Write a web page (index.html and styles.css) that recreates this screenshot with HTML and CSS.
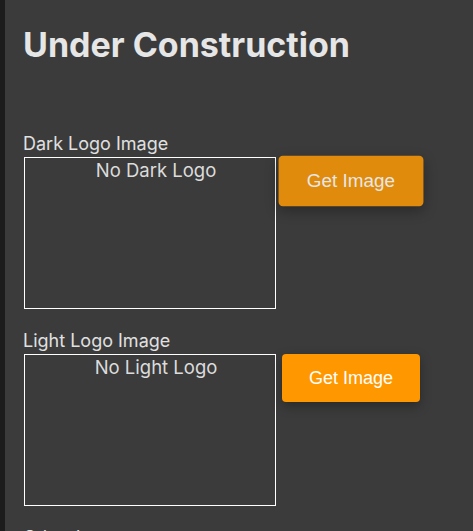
FILE: index.html
```html
<!DOCTYPE html>
<html>
<head>
<meta charset="utf-8">
<link rel="stylesheet" href="styles.css">
</head>
<body>
<div class="page">
  <div class="strip"></div>
  <main class="content">
    <h1 class="title">Under Construction</h1>
    <section class="field">
      <div class="label">Dark Logo Image</div>
      <div class="row">
        <div class="preview">No Dark Logo</div>
        <button class="btn btn-hover">Get Image</button>
      </div>
    </section>
    <section class="field">
      <div class="label">Light Logo Image</div>
      <div class="row">
        <div class="preview">No Light Logo</div>
        <button class="btn">Get Image</button>
      </div>
    </section>
    <section class="field">
      <div class="label">Other Image</div>
    </section>
  </main>
</div>
</body>
</html>
```
FILE: styles.css
```css
html, body {
  margin: 0;
  padding: 0;
  height: 100%;
  overflow: hidden;
}
body {
  background: #3b3b3b;
  font-family: Inter, "Noto Sans", sans-serif;
  color: #e3e3e3;
}
.page {
  display: flex;
  min-height: 100%;
}
.strip {
  width: 5px;
  flex: none;
  background: #1c1c1c;
}
.content {
  padding: 0 0 0 18px;
  flex: 1;
}
.title {
  margin: 24px 0 67px;
  font-size: 34px;
  font-weight: 700;
  line-height: 42px;
  color: #e6e6e6;
}
.field {
  margin-bottom: 21px;
}
.label {
  font-size: 18px;
  line-height: 22px;
  color: #e0e0e0;
}
.row {
  display: flex;
  align-items: flex-start;
  gap: 6px;
  margin-top: 2px;
}
.preview {
  box-sizing: border-box;
  width: 252px;
  height: 152px;
  margin-left: 1px;
  padding-left: 12px;
  border: 1px solid #ffffff;
  text-align: center;
  font-size: 18.5px;
  line-height: 25px;
  color: #dcdcdc;
}
.btn {
  width: 138px;
  height: 48px;
  border: none;
  border-radius: 4px;
  background: #ff9800;
  color: #ffffff;
  font-family: "Liberation Sans", Arial, sans-serif;
  font-size: 18px;
  box-shadow: 0 4px 12px rgba(0, 0, 0, 0.3);
  cursor: pointer;
}
.btn-hover {
  transform: scale(1.05);
  background: #e08b0c;
  color: #e6e6e6;
}
```
